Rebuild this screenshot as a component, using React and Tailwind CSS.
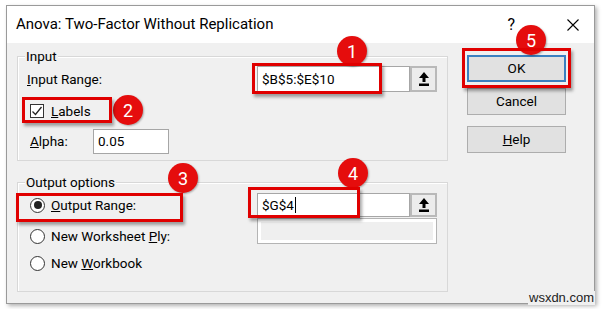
import React from 'react';

const font = { fontFamily: 'Roboto, "Noto Sans", sans-serif' };

function RefButton() {
  return (
    <div className="w-[27px] h-full border-2 border-[#b9b9b9] bg-[#ececec] flex items-center justify-center">
      <svg width="10" height="14" viewBox="0 0 10 14">
        <path d="M5 0 L10 6 L6.5 6 L6.5 10 L3.5 10 L3.5 6 L0 6 Z" fill="#000" />
        <rect x="0" y="11.5" width="10" height="2.5" fill="#000" />
      </svg>
    </div>
  );
}

function Checkbox({ checked }) {
  return (
    <div className="w-[14px] h-[14px] border border-[#333] bg-white flex items-center justify-center">
      {checked && (
        <svg width="12" height="12" viewBox="0 0 12 12">
          <path d="M1.5 6.5 L4.5 9.5 L10.5 2" stroke="#222" strokeWidth="1.3" fill="none" />
        </svg>
      )}
    </div>
  );
}

function Radio({ checked }) {
  return (
    <div className="w-[15px] h-[15px] rounded-full border border-[#333] bg-white flex items-center justify-center">
      {checked && <div className="w-[8px] h-[8px] rounded-full bg-[#222]" />}
    </div>
  );
}

function Group({ label, className, children }) {
  return (
    <div className={`relative w-[431px] border border-[#d8d8d8] shadow-[inset_1px_1px_0_#fff] ${className}`}>
      <span className="absolute left-[7px] top-[-10px] bg-[#f0f0f0] px-[1px] text-[13.5px] leading-[18px]">{label}</span>
      {children}
    </div>
  );
}

function Button({ children, primary, className }) {
  return (
    <div
      className={`w-[99px] h-[27px] flex items-center justify-center text-[13.5px] bg-[#e1e1e1] ${
        primary ? 'border-2 border-[#3b80c0]' : 'border border-[#adadad]'
      } ${className || ''}`}
    >
      {children}
    </div>
  );
}

// annotation overlays, page coordinates
const boxes = [
  { l: 252, t: 63, w: 130, h: 31 },
  { l: 22, t: 97, w: 90, h: 26 },
  { l: 16, t: 193, w: 167, h: 29 },
  { l: 248, t: 187, w: 112, h: 31 },
  { l: 462, t: 48, w: 109, h: 40 },
];

const badges = [
  { n: 1, l: 337, t: 36 },
  { n: 2, l: 113, t: 95 },
  { n: 3, l: 168, t: 163 },
  { n: 4, l: 338, t: 158 },
  { n: 5, l: 516, t: 25 },
];

export default function App() {
  return (
    <div className="relative w-[602px] h-[309px] bg-white overflow-hidden text-black" style={font}>
      <div className="ml-[6px] mt-[5px] w-[589px] h-[299px] border border-[#9a9a9a] shadow-[2px_2px_4px_rgba(0,0,0,0.3)] flex flex-col">
        <div className="h-[37px] bg-white flex items-center shrink-0">
          <span className="pl-[9px] text-[15px] leading-none">Anova: Two-Factor Without Replication</span>
          <span className="ml-auto text-[16px] leading-none mr-[52px]">?</span>
          <svg width="12" height="12" viewBox="0 0 12 12" className="mr-[15px]">
            <path d="M0.5 0.5 L11.5 11.5 M11.5 0.5 L0.5 11.5" stroke="#000" strokeWidth="1.1" />
          </svg>
        </div>

        <div className="flex-1 bg-[#f0f0f0] flex text-[13.5px]">
          <div className="pl-[10px] pt-[13px]">
            <Group label="Input" className="h-[105px]">
              <div className="flex items-center h-[26px] mt-[9px] pl-[9px]">
                <span className="w-[230px]"><u>I</u>nput Range:</span>
                <div className="w-[153px] h-full bg-white border border-[#a6a6a6] flex items-center pl-[4px]">$B$5:$E$10</div>
                <RefButton />
              </div>
              <div className="flex items-center mt-[12px] pl-[12px] h-[14px]">
                <Checkbox checked />
                <span className="ml-[7px]"><u>L</u>abels</span>
              </div>
              <div className="flex items-center mt-[11px] pl-[12px] h-[25px]">
                <span className="w-[63px]"><u>A</u>lpha:</span>
                <div className="w-[76px] h-full bg-white border border-[#a6a6a6] flex items-center pl-[4px]">0.05</div>
              </div>
            </Group>

            <Group label="Output options" className="h-[110px] mt-[21px]">
              <div className="flex">
                <div className="w-[239px] pl-[12px]">
                  <div className="flex items-center h-[24px] mt-[10px]">
                    <Radio checked />
                    <span className="ml-[6px]"><u>O</u>utput Range:</span>
                  </div>
                  <div className="flex items-center h-[24px] mt-[7px]">
                    <Radio />
                    <span className="ml-[6px]">New Worksheet <u>P</u>ly:</span>
                  </div>
                  <div className="flex items-center h-[24px] mt-[3px]">
                    <Radio />
                    <span className="ml-[6px]">New <u>W</u>orkbook</span>
                  </div>
                </div>
                <div className="pt-[10px]">
                  <div className="flex h-[24px]">
                    <div className="w-[153px] h-full bg-white border border-[#a6a6a6] flex items-center pl-[4px]">
                      $G$4<span className="w-[1px] h-[16px] bg-black ml-[1px]" />
                    </div>
                    <RefButton />
                  </div>
                  <div className="w-[180px] h-[26px] mt-[1px] border border-[#b4b4b4] bg-white p-[3px]">
                    <div className="w-full h-full bg-[#efefef]" />
                  </div>
                </div>
              </div>
            </Group>
          </div>

          <div className="ml-[19px] pt-[12px] flex flex-col">
            <Button primary>OK</Button>
            <Button className="mt-[6px] h-[26px]">Cancel</Button>
            <Button className="mt-[11px]"><span><u>H</u>elp</span></Button>
          </div>
        </div>
      </div>

      {badges.map((b) => (
        <div
          key={b.n}
          className="absolute w-[30px] h-[30px] rounded-full bg-[#e50d0d] text-white text-[18px] flex items-center justify-center shadow-[1px_1px_2px_rgba(0,0,0,0.3)]"
          style={{ left: b.l, top: b.t }}
        >
          {b.n}
        </div>
      ))}
      {boxes.map((b, i) => (
        <div
          key={i}
          className="absolute border-[3px] border-[#e00000] shadow-[2px_3px_3px_rgba(0,0,0,0.35)]"
          style={{ left: b.l, top: b.t, width: b.w, height: b.h }}
        />
      ))}

      <span className="absolute left-[528px] top-[291px] text-[13px] leading-[14px] text-[#222] bg-[#f0f0f0] px-[1px]" style={{ fontFamily: '"Liberation Sans", Arial, sans-serif' }}>
        wsxdn.com
      </span>
    </div>
  );
}
